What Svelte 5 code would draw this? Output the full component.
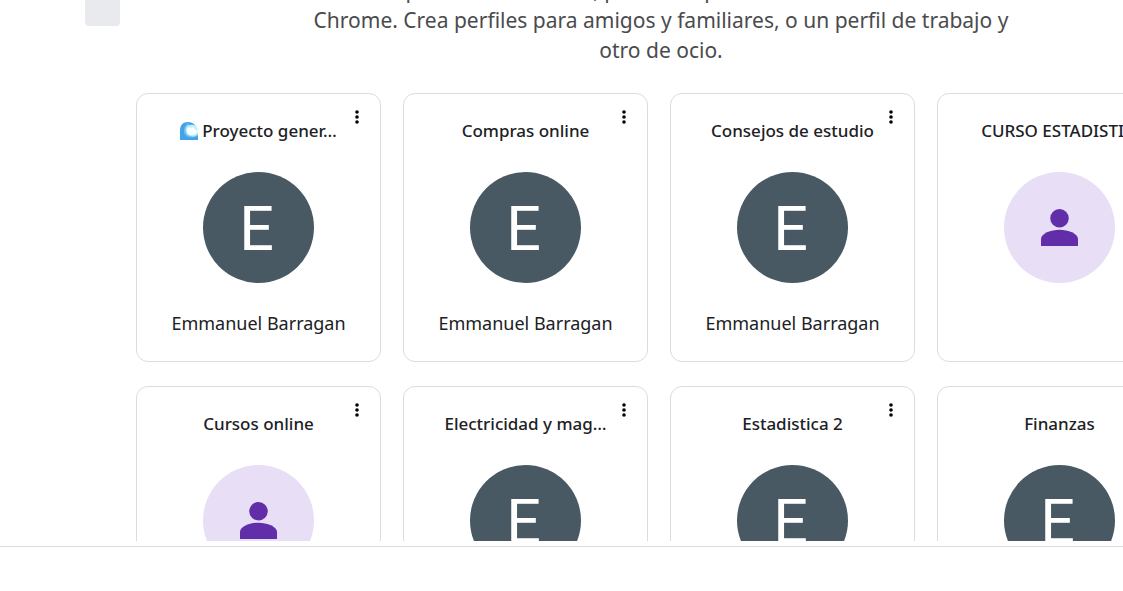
<script>
  const profiles = [
    { title: 'Proyecto gener…', wave: true, person: 'Emmanuel Barragan' },
    { title: 'Compras online', person: 'Emmanuel Barragan' },
    { title: 'Consejos de estudio', person: 'Emmanuel Barragan' },
    { title: 'CURSO ESTADISTI…', person: '' },
    { title: 'Cursos online', person: '' },
    { title: 'Electricidad y mag…', person: 'Emmanuel Barragan' },
    { title: 'Estadistica 2', person: 'Emmanuel Barragan' },
    { title: 'Finanzas', person: 'Emmanuel Barragan' }
  ];
</script>

<div class="page">
  <main>
    <span class="shape" aria-hidden="true"></span>
    <div class="content">
      <header>
        <p>
          Con los perfiles de Chrome, puedes separar todos tus elementos de<br />
          Chrome. Crea perfiles para amigos y familiares, o un perfil de trabajo y<br />
          otro de ocio.
        </p>
      </header>
      <ul class="grid">
        {#each profiles as profile}
          <li class="card">
            <button class="profile">
              <span class="title">
                {#if profile.wave}
                  <svg class="wave" viewBox="0 0 18 18" aria-hidden="true">
                    <path d="M0 18V9C0 3 3 0 8 0c3 0 5 1 7 3l-1 4 1 7 3-1v5z" fill="#45a2e8" />
                    <path d="M4 9c0-4 2-7 5-8l-1 4-1 5 4 4 7-2v2c-7 3-14 1-14-5z" fill="#6ec3f5" />
                    <path d="M6 6c1-3 4-4 8-3l4 1-2 1 2 2-1 1 1 3c-1 3-4 4-7 3-4 0-6-4-5-8z" fill="#bdeffb" />
                    <path d="M7 7l2-2 1 1 3-1 2 2 2 2c0 3-3 4-5 4-4 0-6-3-5-6z" fill="#f9feff" />
                  </svg>
                {/if}
                <span>{profile.title}</span>
              </span>
              {#if profile.person}
                <span class="avatar initial">E</span>
                <span class="person">{profile.person}</span>
              {:else}
                <span class="avatar guest">
                  <svg viewBox="0 0 37 37" aria-hidden="true">
                    <circle cx="18.5" cy="9.25" r="9.25" />
                    <path d="M0 37v-7c0-5.5 10-9.25 18.5-9.25S37 24.5 37 30v7z" />
                  </svg>
                </span>
              {/if}
            </button>
            <button class="menu" aria-label="Más acciones">
              <svg viewBox="0 0 4 14" aria-hidden="true">
                <circle cx="2" cy="2" r="1.8" />
                <circle cx="2" cy="7" r="1.8" />
                <circle cx="2" cy="12" r="1.8" />
              </svg>
            </button>
          </li>
        {/each}
      </ul>
    </div>
  </main>
  <footer></footer>
</div>

<style>
  :global(body) {
    margin: 0;
    background: #fff;
  }

  .page {
    display: flex;
    flex-direction: column;
    height: 100vh;
    overflow: hidden;
    font-family: 'Segoe UI', 'Noto Sans', 'Open Sans', sans-serif;
    color: #202124;
  }

  main {
    position: relative;
    flex: 1;
    min-height: 0;
    overflow: hidden;
  }

  .shape {
    position: absolute;
    top: -10px;
    left: 85px;
    width: 35px;
    height: 36px;
    border-radius: 4px;
    background: #e8eaed;
  }

  .content {
    width: max-content;
    padding-left: 136px;
  }

  header {
    display: flex;
    flex-direction: column;
    justify-content: flex-end;
    height: 65px;
    margin-bottom: 28px;
    padding-left: 4px;
  }

  p {
    margin: 0;
    font-size: 21px;
    line-height: 30px;
    text-align: center;
    color: #4a4b4d;
  }

  .grid {
    display: grid;
    grid-template-columns: repeat(4, 245px);
    gap: 24px 22px;
    margin: 0;
    padding: 0;
    list-style: none;
  }

  .card {
    position: relative;
    box-sizing: border-box;
    height: 269px;
    border: 1px solid #dadce0;
    border-radius: 12px;
  }

  button {
    border: 0;
    background: none;
    color: inherit;
    font: inherit;
    cursor: pointer;
  }

  .profile {
    display: flex;
    flex-direction: column;
    align-items: center;
    width: 100%;
    height: 100%;
    padding: 24px 0 0;
    border-radius: 12px;
  }

  .title {
    display: flex;
    align-items: center;
    gap: 4px;
    font-size: 17px;
    font-weight: 500;
    line-height: 26px;
    white-space: nowrap;
  }

  .wave {
    width: 18px;
    height: 18px;
  }

  .avatar {
    display: flex;
    align-items: center;
    justify-content: center;
    box-sizing: border-box;
    width: 111px;
    height: 111px;
    margin: 28px 0 26px;
    border-radius: 50%;
  }

  .initial {
    padding: 2px 4px 0 0;
    background: #485963;
    color: #fff;
    font-family: Roboto, sans-serif;
    font-size: 61px;
    line-height: 60px;
  }

  .guest {
    background: #e8def5;
  }

  .guest svg {
    width: 37px;
    height: 37px;
    fill: #612da8;
  }

  .person {
    font-size: 18px;
    line-height: 28px;
  }

  .menu {
    position: absolute;
    top: 9px;
    right: 9px;
    display: flex;
    align-items: center;
    justify-content: center;
    width: 28px;
    height: 28px;
    padding: 0;
    border-radius: 50%;
  }

  .menu svg {
    width: 4px;
    height: 14px;
    fill: #000;
  }

  footer {
    flex: none;
    height: 44px;
    margin-top: 5px;
    border-top: 1px solid #dadce0;
  }
</style>
